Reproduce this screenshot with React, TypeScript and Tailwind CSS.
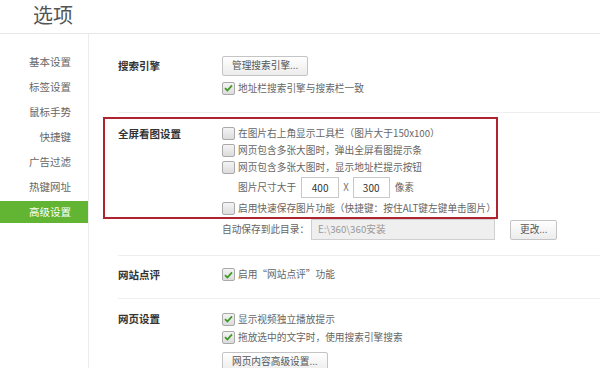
import React from 'react';

const sideItems = ['基本设置', '标签设置', '鼠标手势', '快捷键', '广告过滤', '热键网址', '高级设置'];

const Check = ({ on = false }: { on?: boolean }) => (
  <span className="w-[13px] h-[13px] shrink-0 rounded-[2px] border border-[#a9a9a9] bg-gradient-to-b from-[#f4f4f4] to-[#dcdcdc] flex items-center justify-center">
    {on && (
      <svg width="9" height="8" viewBox="0 0 9 8">
        <path d="M1 4.2 L3.4 6.5 L8 1.3" fill="none" stroke="#3f9a23" strokeWidth="1.8" />
      </svg>
    )}
  </span>
);

const Row = ({ on, children, h = 'h-[17px]' }: { on?: boolean; children: React.ReactNode; h?: string }) => (
  <div className={`${h} flex items-center gap-[3px]`}>
    <Check on={on} />
    <span className="text-[9.7px] text-[#666] whitespace-nowrap">{children}</span>
  </div>
);

const Btn = ({ children }: { children: React.ReactNode }) => (
  <button className="flex items-center h-[20px] px-[9px] rounded-[2px] border border-[#c4c4c4] bg-gradient-to-b from-white to-[#ececec] text-[9.7px] text-[#555] leading-none">
    {children}
  </button>
);

const Label = ({ children }: { children: React.ReactNode }) => (
  <div className="w-[104px] shrink-0 text-[10.5px] font-bold text-[#333] leading-[18px]">{children}</div>
);

export default function App() {
  return (
    <div className="w-[600px] h-[368px] overflow-hidden bg-white" style={{ fontFamily: '"Noto Sans CJK SC", "Noto Sans", sans-serif' }}>
      <div className="h-[34px] border-b border-[#e6e6e6] pl-[33px] text-[20px] text-[#555] leading-[30px]">选项</div>
      <div className="flex h-[334px]">
        <div className="w-[89px] shrink-0 border-r border-[#ececec] pt-[17px] flex flex-col gap-[3px]">
          {sideItems.map((s, i) => (
            <div
              key={s}
              className={`h-[22px] flex items-center justify-end pr-[17px] text-[10.5px] ${i === 6 ? 'bg-[#62b533] text-white' : 'text-[#666]'}`}
            >
              {s}
            </div>
          ))}
        </div>
        <div className="flex-1">
          {/* search engine */}
          <div className="ml-[29px] pt-[22px] pb-[15px] border-b border-[#eeeeee] flex">
            <div className="w-[104px] shrink-0 text-[10.5px] font-bold text-[#333] leading-[20px]">搜索引擎</div>
            <div className="flex flex-col items-start">
              <Btn>管理搜索引擎...</Btn>
              <div className="mt-[3px]">
                <Row on h="h-[18px]">地址栏搜索引擎与搜索栏一致</Row>
              </div>
            </div>
          </div>

          {/* fullscreen image */}
          <div className="ml-[14px] mt-[4px] w-[395px] border-2 border-[#b0232e] pl-[13px] pt-[6px] flex">
            <Label>全屏看图设置</Label>
            <div>
              <Row>在图片右上角显示工具栏（图片大于150x100）</Row>
              <Row>网页包含多张大图时，弹出全屏看图提示条</Row>
              <Row>网页包含多张大图时，显示地址栏提示按钮</Row>
              <div className="h-[23px] flex items-center pl-[16px] text-[9.7px] text-[#666]">
                <span>图片尺寸大于</span>
                <span className="ml-[5px] w-[38px] h-[21px] border border-[#c8c8c8] flex items-center justify-center text-[10px] text-[#333]">400</span>
                <span className="mx-[4px] text-[#777]">X</span>
                <span className="w-[37px] h-[21px] border border-[#c8c8c8] flex items-center justify-center text-[10px] text-[#333]">300</span>
                <span className="ml-[5px]">像素</span>
              </div>
              <div className="mt-[1px]">
                <Row>启用快速保存图片功能（快捷键：按住ALT键左键单击图片）</Row>
              </div>
            </div>
          </div>
          <div className="ml-[29px] pb-[15px] border-b border-[#eeeeee] flex">
            <div className="w-[104px] shrink-0" />
            <div className="h-[21px] flex items-center text-[9.7px] text-[#666]">
              <span className="w-[89px] whitespace-nowrap">自动保存到此目录：</span>
              <span className="w-[184px] h-[21px] border border-[#cfcfcf] bg-[#efefef] flex items-center pl-[6px] text-[#999]">E:\360\360安装</span>
              <span className="ml-[15px] flex">
                <Btn>更改...</Btn>
              </span>
            </div>
          </div>

          {/* site review */}
          <div className="ml-[29px] pt-[10px] pb-[14px] border-b border-[#eeeeee] flex">
            <Label>网站点评</Label>
            <Row on>启用“网站点评”功能</Row>
          </div>

          {/* page settings */}
          <div className="ml-[29px] pt-[11px] flex">
            <Label>网页设置</Label>
            <div>
              <Row on h="h-[18px]">显示视频独立播放提示</Row>
              <Row on h="h-[18px]">拖放选中的文字时，使用搜索引擎搜索</Row>
              <div className="mt-[6px] flex">
                <Btn>网页内容高级设置...</Btn>
              </div>
            </div>
          </div>
        </div>
      </div>
    </div>
  );
}
